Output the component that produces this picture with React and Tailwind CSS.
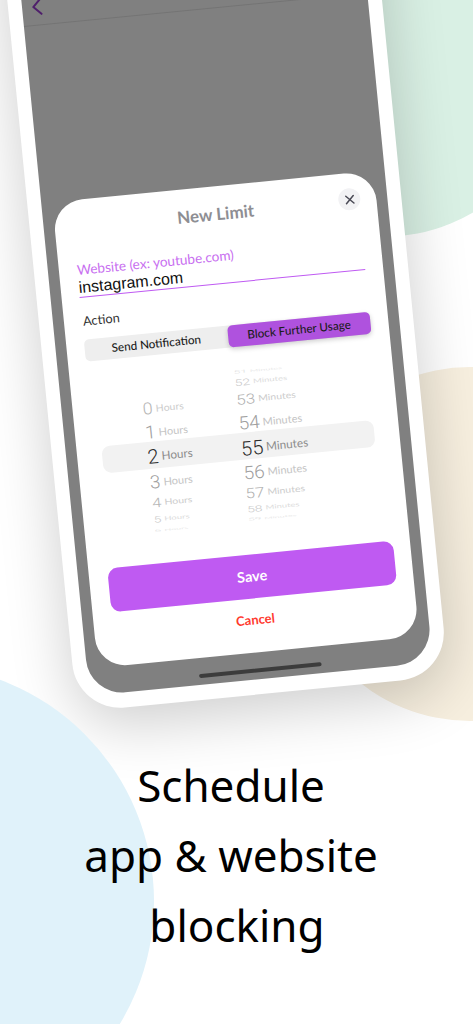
import React from 'react';
import { X, ChevronLeft } from 'lucide-react';

const hours = [
  { n: '0', h: 'h-[22px]', num: 'text-[18px] text-[#b5b5b5]', label: 'text-[10.5px] text-[#cccccc]', squash: 'scale-y-[0.92]' },
  { n: '1', h: 'h-[24px]', num: 'text-[19px] text-[#a0a0a0]', label: 'text-[11px] text-[#c4c4c4]', squash: 'scale-y-[0.96]' },
  { n: '2', h: 'h-[26px]', num: 'text-[20px] text-[#2b2b2b]', label: 'text-[11.7px] text-[#8c8c8c]', squash: '' },
  { n: '3', h: 'h-[24px]', num: 'text-[19px] text-[#a0a0a0]', label: 'text-[11px] text-[#c4c4c4]', squash: 'scale-y-[0.96]' },
  { n: '4', h: 'h-[19px]', num: 'text-[17px] text-[#b5b5b5]', label: 'text-[10.5px] text-[#cccccc]', squash: 'scale-y-[0.78]' },
  { n: '5', h: 'h-[14px]', num: 'text-[14px] text-[#c8c8c8]', label: 'text-[9.5px] text-[#dcdcdc]', squash: 'scale-y-[0.6]' },
  { n: '6', h: 'h-[8px]', num: 'text-[12px] text-[#e0e0e0]', label: 'text-[9px] text-[#e8e8e8]', squash: 'scale-y-[0.3]' },
];

const minutes = [
  { n: '51', h: 'h-[8px]', num: 'text-[12px] text-[#dcdcdc]', label: 'text-[9px] text-[#e8e8e8]', squash: 'scale-y-[0.35]' },
  { n: '52', h: 'h-[13px]', num: 'text-[14px] text-[#c8c8c8]', label: 'text-[9.5px] text-[#dcdcdc]', squash: 'scale-y-[0.65]' },
  { n: '53', h: 'h-[22px]', num: 'text-[17px] text-[#b0b0b0]', label: 'text-[10.5px] text-[#cccccc]', squash: 'scale-y-[0.82]' },
  { n: '54', h: 'h-[25px]', num: 'text-[19px] text-[#a0a0a0]', label: 'text-[11px] text-[#c4c4c4]', squash: 'scale-y-[0.96]' },
  { n: '55', h: 'h-[26px]', num: 'text-[20px] text-[#2b2b2b]', label: 'text-[11.7px] text-[#8c8c8c]', squash: '' },
  { n: '56', h: 'h-[23px]', num: 'text-[19px] text-[#a0a0a0]', label: 'text-[11px] text-[#c4c4c4]', squash: 'scale-y-[0.96]' },
  { n: '57', h: 'h-[18px]', num: 'text-[17px] text-[#b0b0b0]', label: 'text-[10.5px] text-[#cccccc]', squash: 'scale-y-[0.82]' },
  { n: '58', h: 'h-[13px]', num: 'text-[14px] text-[#c8c8c8]', label: 'text-[9.5px] text-[#dcdcdc]', squash: 'scale-y-[0.6]' },
  { n: '59', h: 'h-[8px]', num: 'text-[12px] text-[#e0e0e0]', label: 'text-[9px] text-[#e8e8e8]', squash: 'scale-y-[0.3]' },
];

const WheelRow = ({ row, unit }) => (
  <div className={`${row.h} flex items-center ${row.squash}`}>
    <span className={`${row.num} font-light font-['Roboto',sans-serif] mr-[3px] leading-none`}>{row.n}</span>
    <span className={`${row.label} font-['Lato',sans-serif] leading-none`}>{unit}</span>
  </div>
);

const App = () => {
  return (
    <div className="relative w-[473px] h-[1024px] overflow-hidden bg-white">
      {/* Background circles */}
      <div className="absolute left-[206px] top-[-117px] w-[354px] h-[354px] rounded-full bg-[#d9f0e4]" />
      <div className="absolute left-[293px] top-[367px] w-[354px] h-[354px] rounded-full bg-[#f7efdf]" />

      {/* Phone */}
      <div className="relative ml-[-1px] mt-[-84px] w-[373px] h-[800px] origin-top-left -rotate-[5.6deg] bg-white rounded-b-[48px] px-[14px] pb-[15px] shadow-[0_16px_60px_rgba(0,0,0,0.2)]">
        <div className="h-full bg-[#808080] rounded-b-[36px] flex flex-col overflow-hidden">
          <div className="h-[113px] shrink-0 border-b border-[#747474] flex items-end relative">
            <ChevronLeft className="mb-[3px] w-[30px] h-[30px] text-[#4f1f6b]" strokeWidth={1.6} />
            <span className="absolute left-0 right-0 bottom-[13px] text-center text-[17px] font-semibold text-[#1c1c1c] font-['Lato',sans-serif]">
              Daily Website Limits
            </span>
          </div>

          {/* Modal sheet */}
          <div className="relative mt-[177px] mx-[11px] h-[468px] shrink-0 bg-white rounded-[30px] flex flex-col">
            <button className="absolute right-[16px] top-[15px] w-[22px] h-[22px] rounded-full bg-[#f2f2f4] flex items-center justify-center">
              <X className="w-[15px] h-[15px] text-[#4a4a55]" strokeWidth={2.4} />
            </button>
            <p className="pt-[17px] text-center text-[17px] leading-[22px] font-bold text-[#8e8e93] font-['Lato',sans-serif]">New Limit</p>

            <div className="mt-[23px] mx-[18px] border-b-[1.5px] border-[#bf5af2]">
              <p className="text-[13.6px] leading-[17px] text-[#c86ff0] font-['Lato',sans-serif]">Website (ex: youtube.com)</p>
              <p className="text-[16px] leading-[18px] text-[#111] font-['Liberation_Sans',sans-serif]">instagram.com</p>
            </div>

            <p className="mt-[13.5px] mx-[19px] text-[12.8px] leading-[18px] text-[#333] font-['Lato',sans-serif]">Action</p>

            <div className="mt-[10px] mx-[18px] h-[22px] grid grid-cols-2 bg-[#eeeeee] rounded-[5px] text-[11.7px] font-medium text-[#1c1c1c] font-['Lato',sans-serif]">
              <div className="flex items-center justify-center">Send Notification</div>
              <div className="flex items-center justify-center bg-[#af52de] rounded-[5px] shadow-[0_2px_5px_rgba(0,0,0,0.2)]">Block Further Usage</div>
            </div>

            {/* Time wheels */}
            <div className="relative mt-[19.5px] h-[158px] overflow-hidden">
              <div className="absolute left-[25px] top-[67px] w-[273px] h-[27px] rounded-[8px] bg-[#f2f2f2]" />
              <div className="relative flex pt-[1px]">
                <div className="ml-[70px] w-[94px] pt-[22px]">
                  {hours.map((row) => <WheelRow key={row.n} row={row} unit="Hours" />)}
                </div>
                <div className="pt-[1px]">
                  {minutes.map((row) => <WheelRow key={row.n} row={row} unit="Minutes" />)}
                </div>
              </div>
            </div>

            <button className="mt-[31px] ml-[19px] mr-[17px] h-[44px] shrink-0 rounded-[10px] bg-[#bf5af2] text-white text-[14.5px] font-bold font-['Lato',sans-serif]">Save</button>
            <p className="mt-[12px] text-center text-[13px] leading-[18px] font-bold text-[#ff3b30] font-['Lato',sans-serif]">Cancel</p>
          </div>

          <div className="mt-[16px] mx-auto w-[123px] h-[4px] shrink-0 rounded-full bg-[#3c3c3c]" />
        </div>
      </div>

      {/* Sits over the phone's shadow */}
      <div className="absolute left-[-319px] top-[665px] w-[473px] h-[473px] rounded-full bg-[#e0f2fa]" />

      {/* Caption */}
      <div className="relative mt-[34px] text-center text-[44px] leading-[70px] text-black font-['Noto_Sans',sans-serif]">
        <p className="pr-[11px]">Schedule</p>
        <p className="pr-[11px]">app &amp; website</p>
        <p className="pl-[1px]">blocking</p>
      </div>
    </div>
  );
};

export default App;
